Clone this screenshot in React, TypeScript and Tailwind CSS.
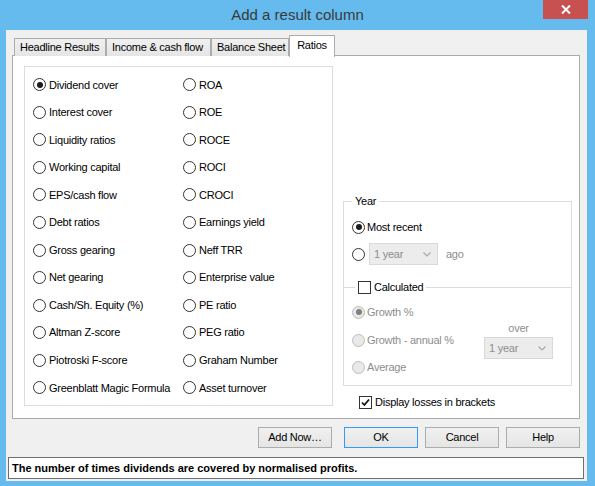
import React from "react"

const LEFT_ITEMS = [
  "Dividend cover",
  "Interest cover",
  "Liquidity ratios",
  "Working capital",
  "EPS/cash flow",
  "Debt ratios",
  "Gross gearing",
  "Net gearing",
  "Cash/Sh. Equity (%)",
  "Altman Z-score",
  "Piotroski F-score",
  "Greenblatt Magic Formula",
]

const RIGHT_ITEMS = [
  "ROA",
  "ROE",
  "ROCE",
  "ROCI",
  "CROCI",
  "Earnings yield",
  "Neff TRR",
  "Enterprise value",
  "PE ratio",
  "PEG ratio",
  "Graham Number",
  "Asset turnover",
]

const TABS = [
  { label: "Headline Results", width: "w-[92px]" },
  { label: "Income & cash flow", width: "w-[105px]" },
  { label: "Balance Sheet", width: "w-[78px]" },
]

const GROUP_BORDER = "border-[#dcdcdc]"
const DISABLED_TEXT = "text-[#8d8d8d]"

function Radio({ checked = false, disabled = false }: { checked?: boolean; disabled?: boolean }) {
  return (
    <span
      className={`flex h-[13px] w-[13px] shrink-0 items-center justify-center rounded-full border ${
        disabled ? "border-[#bcbcbc] bg-[#e9e9e9]" : "border-[#333333] bg-white"
      }`}
    >
      {checked && (
        <span className={`h-[6px] w-[6px] rounded-full ${disabled ? "bg-[#808080]" : "bg-[#1c1c1c]"}`} />
      )}
    </span>
  )
}

function Checkbox({ checked = false }: { checked?: boolean }) {
  return (
    <span className="flex h-[13px] w-[13px] shrink-0 items-center justify-center border border-[#333333] bg-white">
      {checked && (
        <svg width="9" height="9" viewBox="0 0 9 9">
          <path d="M1 4.5 L3.4 7 L8 1.5" fill="none" stroke="#111" strokeWidth="1.8" />
        </svg>
      )}
    </span>
  )
}

function Combo({ value }: { value: string }) {
  return (
    <div className={`flex h-[22px] w-[69px] items-center justify-between border border-[#d9d9d9] bg-[#ececec] pl-[4px] pr-[6px] ${DISABLED_TEXT}`}>
      <span>{value}</span>
      <svg width="8" height="5" viewBox="0 0 8 5">
        <path d="M0.5 0.5 L4 4 L7.5 0.5" fill="none" stroke="#a8a8a8" strokeWidth="1.2" />
      </svg>
    </div>
  )
}

function DialogButton({ label, isDefault = false }: { label: string; isDefault?: boolean }) {
  return (
    <button
      className={`flex h-[21px] w-[74px] items-center justify-center border bg-gradient-to-b from-[#f0f0f0] to-[#e5e5e5] text-black ${
        isDefault ? "border-[#3399ff]" : "border-[#acacac]"
      }`}
    >
      {label}
    </button>
  )
}

export default function App() {
  return (
    <div className="flex h-[486px] w-[595px] flex-col bg-[#65bbee] font-['Liberation_Sans',Arial,sans-serif] text-[11px] tracking-[-0.25px] text-black">
      {/* title bar */}
      <div className="flex h-[30px] shrink-0 items-start">
        <div className="w-[52px]" />
        <div className="flex h-[30px] flex-1 items-center justify-center text-[15px] tracking-normal text-[#3a3a3a]">
          Add a result column
        </div>
        <div className="mr-[7px] flex h-[19px] w-[45px] items-center justify-center bg-[#c75050]">
          <svg width="10" height="9" viewBox="0 0 10 9">
            <path d="M1 0.5 L9 8.5 M9 0.5 L1 8.5" stroke="white" strokeWidth="2" />
          </svg>
        </div>
      </div>

      {/* client area */}
      <div className="ml-[6px] flex h-[451px] w-[581px] flex-col bg-[#f0f0f0] pl-[6px] pr-[7px] pt-[5px]">
        {/* tabs */}
        <div className="relative z-10 ml-[2px] flex h-[21px] items-end whitespace-nowrap">
          {TABS.map(tab => (
            <div
              key={tab.label}
              className={`flex h-[18px] ${tab.width} items-center border border-b-0 border-[#acacac] bg-gradient-to-b from-[#f0f0f0] to-[#e5e5e5] pl-[5px]`}
            >
              {tab.label}
            </div>
          ))}
          <div className="-mb-px flex h-[22px] w-[46px] items-center justify-center border border-b-0 border-[#acacac] bg-white pb-[2px]">
            Ratios
          </div>
        </div>

        {/* tab page */}
        <div className="-mt-px flex h-[364px] w-[568px] border border-[#acacac] bg-white pl-[11px] pt-[10px]">
          <div className={`grid h-[340px] w-[309px] auto-rows-[27.55px] grid-cols-[150px_1fr] border ${GROUP_BORDER} pl-[8px] pt-[4px]`}>
            {LEFT_ITEMS.map((left, i) => (
              <React.Fragment key={left}>
                <div className="flex items-center gap-[3px]">
                  <Radio checked={i === 0} />
                  <span>{left}</span>
                </div>
                <div className="flex items-center gap-[3px]">
                  <Radio />
                  <span>{RIGHT_ITEMS[i]}</span>
                </div>
              </React.Fragment>
            ))}
          </div>

          <div className="ml-[10px] flex w-[229px] flex-col pt-[135px]">
            <div className={`border ${GROUP_BORDER}`}>
              <div className="-mt-[9px] ml-[8px] w-fit bg-white px-[3px] leading-[16px]">Year</div>
              <div className="ml-[8px] mt-[8px] flex h-[20px] items-center gap-[2px]">
                <Radio checked />
                <span>Most recent</span>
              </div>
              <div className="ml-[8px] mt-[6px] flex h-[22px] items-center">
                <Radio />
                <div className="ml-[4px]">
                  <Combo value="1 year" />
                </div>
                <span className={`ml-[8px] ${DISABLED_TEXT}`}>ago</span>
              </div>

              <div className={`mt-[22px] border-t ${GROUP_BORDER} pb-[8px]`}>
                <div className="-mt-[9px] ml-[11px] flex h-[16px] w-fit items-center gap-[3px] bg-white px-[3px]">
                  <Checkbox />
                  <span>Calculated</span>
                </div>
                <div className="flex">
                  <div className={`ml-[8px] flex flex-col ${DISABLED_TEXT}`}>
                    <div className="mt-[7px] flex h-[20px] items-center gap-[2px]">
                      <Radio checked disabled />
                      <span>Growth %</span>
                    </div>
                    <div className="mt-[8px] flex h-[20px] items-center gap-[2px]">
                      <Radio disabled />
                      <span>Growth - annual %</span>
                    </div>
                    <div className="mt-[7px] flex h-[20px] items-center gap-[2px]">
                      <Radio disabled />
                      <span>Average</span>
                    </div>
                  </div>
                  <div className="ml-auto mr-[18px] mt-[25px] flex w-[69px] flex-col items-center">
                    <span className={`h-[16px] leading-[16px] ${DISABLED_TEXT}`}>over</span>
                    <div className="mt-px">
                      <Combo value="1 year" />
                    </div>
                  </div>
                </div>
              </div>
            </div>

            <div className="ml-[16px] mt-[6px] flex h-[20px] items-center gap-[3px]">
              <Checkbox checked />
              <span>Display losses in brackets</span>
            </div>
          </div>
        </div>

        {/* buttons */}
        <div className="mt-[8px] flex justify-end gap-[7px]">
          <div className="mr-[5px]">
            <DialogButton label="Add Now…" />
          </div>
          <DialogButton label="OK" isDefault />
          <DialogButton label="Cancel" />
          <DialogButton label="Help" />
        </div>

        {/* status line */}
        <div className="-ml-[4px] mt-[9px] flex h-[22px] w-[576px] items-center border border-[#6e6e6e] bg-white pl-[3px] font-bold tracking-normal">
          The number of times dividends are covered by normalised profits.
        </div>
      </div>
    </div>
  )
}
